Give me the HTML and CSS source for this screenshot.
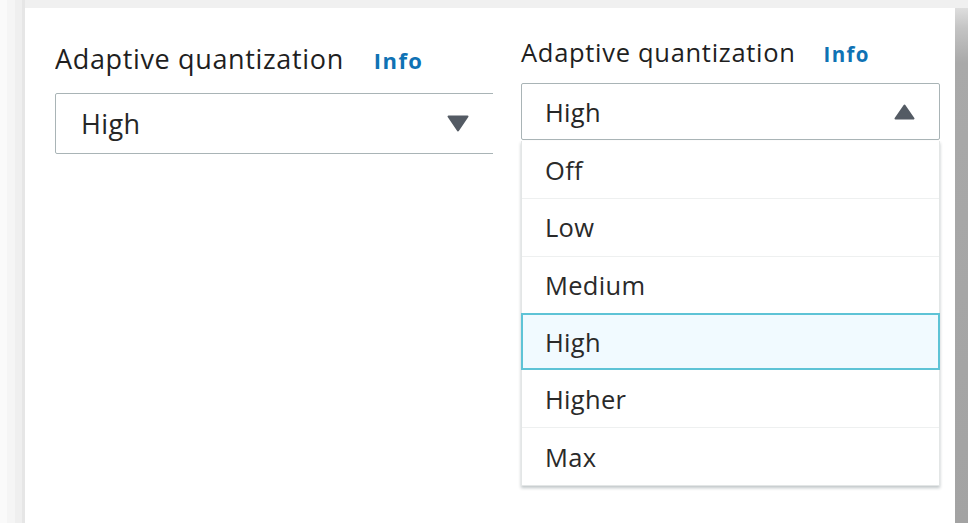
FILE: index.html
```html
<!DOCTYPE html>
<html lang="en">
<head>
<meta charset="utf-8">
<title>Adaptive quantization</title>
<link rel="stylesheet" href="styles.css">
</head>
<body>
<div class="frame">
  <div class="gutter"></div>
  <main class="card">
    <section class="field field-closed">
      <div class="label-row">
        <span class="label">Adaptive quantization</span>
        <a class="info" href="#">Info</a>
      </div>
      <div class="select">
        <span class="value">High</span>
        <svg class="caret" width="22" height="17" viewBox="0 0 22 17"><path d="M1.5 1.5 H20.5 L11 15.5 Z" fill="#545b64" stroke="#545b64" stroke-width="2" stroke-linejoin="round"/></svg>
      </div>
    </section>
    <section class="field field-open">
      <div class="label-row">
        <span class="label">Adaptive quantization</span>
        <a class="info" href="#">Info</a>
      </div>
      <div class="select">
        <span class="value">High</span>
        <svg class="caret" width="21" height="16" viewBox="0 0 21 16"><path d="M10.5 1.5 L19.5 14.5 H1.5 Z" fill="#545b64" stroke="#545b64" stroke-width="2" stroke-linejoin="round"/></svg>
      </div>
      <ul class="options">
        <li class="option">Off</li>
        <li class="option">Low</li>
        <li class="option">Medium</li>
        <li class="option selected">High</li>
        <li class="option">Higher</li>
        <li class="option">Max</li>
      </ul>
    </section>
  </main>
  <div class="edge"></div>
</div>
</body>
</html>
```

FILE: styles.css
```css
* { box-sizing: border-box; }

html, body {
  margin: 0;
  height: 100%;
  background: #f0f0f0;
  font-family: "Open Sans", "Noto Sans", sans-serif;
  color: #1f1f1f;
}

.frame {
  display: flex;
  height: 523px;
  padding-top: 8px;
  overflow: hidden;
}

.gutter {
  width: 25px;
  flex: none;
  margin-top: -8px;
  background: linear-gradient(to right, #fafafa 0, #fafafa 7px, #f5f5f5 7px, #f5f5f5 15px, #efefef 15px, #efefef 22px, #e6e6e6 22px);
}

.edge {
  width: 13px;
  flex: none;
  background: linear-gradient(to bottom, #dedede 0, #c4c4c4 20px, #a9a9a9 55px, #a3a3a3 100%);
}

.card {
  width: 930px;
  flex: none;
  background: #fff;
  display: flex;
  align-items: flex-start;
  padding-left: 30px;
}

.field-closed {
  width: 438px;
  flex: none;
  overflow: hidden;
  padding-top: 34px;
}

.field-open {
  width: 419px;
  flex: none;
  margin-left: 28px;
  padding-top: 28px;
}

.label-row {
  display: flex;
  align-items: baseline;
  white-space: nowrap;
}

.label {
  font-size: 27px;
  letter-spacing: 0.65px;
  line-height: 34px;
  color: #1f1f1f;
}

.info {
  font-weight: 700;
  font-size: 22px;
  letter-spacing: 1.4px;
  color: #0f72b4;
  text-decoration: none;
  margin-left: 30px;
}

.field-open .label { font-size: 25.5px; letter-spacing: 0.7px; line-height: 32px; }
.field-open .info { font-size: 20.5px; letter-spacing: 1.3px; margin-left: 28px; }

.select {
  display: flex;
  align-items: center;
  justify-content: space-between;
  border: 1px solid #a9b4b6;
  border-radius: 2px;
  background: #fff;
  color: #262626;
}

.field-closed .select {
  width: 470px;
  height: 61px;
  margin-top: 17px;
  padding: 0 55px 0 25px;
  font-size: 27px;
  letter-spacing: 0.4px;
}

.field-open .select {
  height: 57px;
  margin-top: 15px;
  padding: 0 24px 0 23px;
  font-size: 25.5px;
  letter-spacing: 0.3px;
}

.options {
  list-style: none;
  margin: 1px 0 0;
  padding: 0;
  border: 1px solid #e3e6e6;
  border-top: none;
  box-shadow: 0 2px 3px rgba(0, 28, 36, 0.25);
}

.option {
  height: 57.3px;
  display: flex;
  align-items: center;
  padding-left: 23px;
  font-size: 25.5px;
  letter-spacing: 0.3px;
  color: #2a2a2a;
  border-top: 1px solid #eef0f0;
}

.option:first-child { border-top: none; }

.option.selected {
  background: #f1faff;
  border: 2px solid #5ec3d6;
  margin: 0 -1px;
  padding-left: 22px;
}

.option.selected + .option { border-top: none; }
```
